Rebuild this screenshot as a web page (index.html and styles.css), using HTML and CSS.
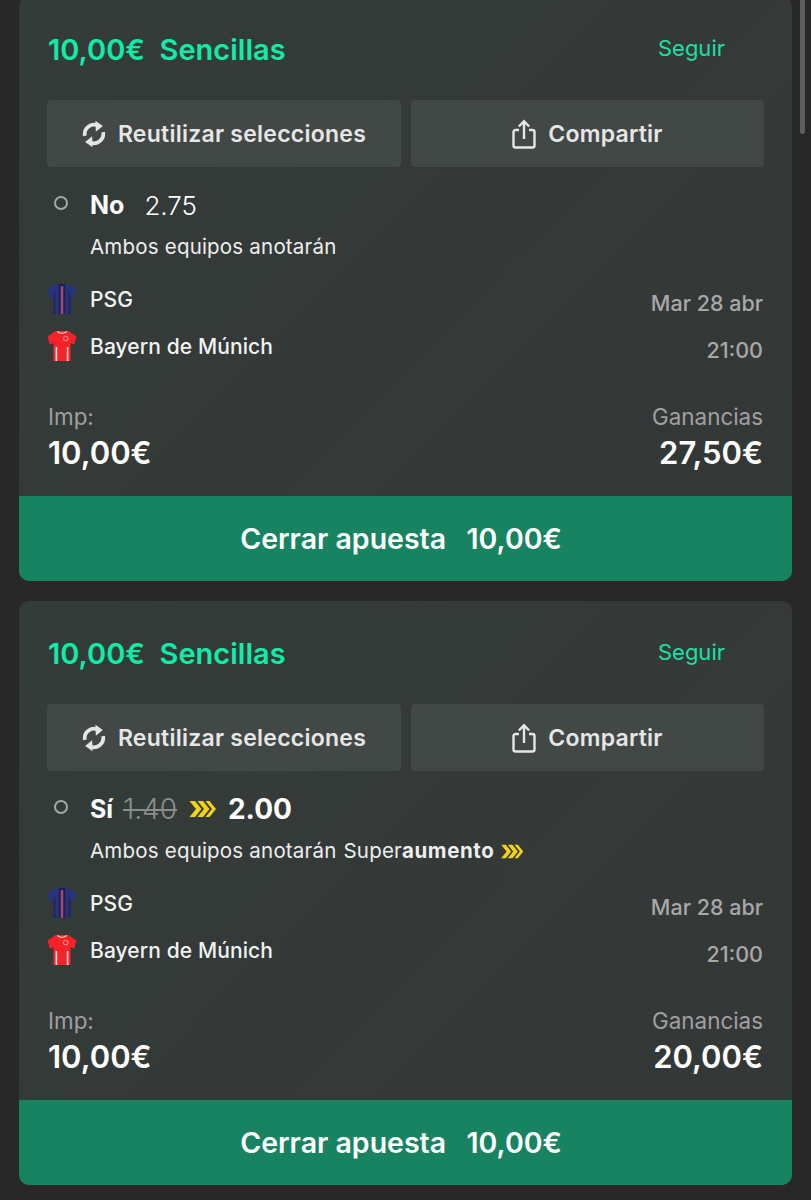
FILE: index.html
```html
<!DOCTYPE html>
<html lang="es">
<head>
  <meta charset="UTF-8" />
  <meta name="viewport" content="width=device-width, initial-scale=1" />
  <title>Mis apuestas</title>
  <link rel="stylesheet" href="styles.css">
</head>
<body>
  <svg class="icon-defs" width="0" height="0" aria-hidden="true">
    <symbol id="i-reuse" viewBox="2.500 0 19 24">
      <path d="M4.2 13.6A8 8 0 0 1 16 5.2" fill="none" stroke="currentColor" stroke-width="3.2"/>
      <path d="M13.2 0.6L19.6 5.2L13.6 10Z" fill="currentColor"/>
      <path d="M19.8 10.4A8 8 0 0 1 8 18.8" fill="none" stroke="currentColor" stroke-width="3.2"/>
      <path d="M10.8 23.4L4.4 18.8L10.4 14Z" fill="currentColor"/>
    </symbol>
    <symbol id="i-share" viewBox="0 0 24 30">
      <path d="M7 11H3.5A2 2 0 0 0 1.500 13V26.500A2 2 0 0 0 3.500 28.500H20.500A2 2 0 0 0 22.500 26.500V13A2 2 0 0 0 20.500 11H17" fill="none" stroke="currentColor" stroke-width="2.400"/>
      <path d="M12 20V2.500M6.800 7.500L12 2.300L17.200 7.500" fill="none" stroke="currentColor" stroke-width="2.400"/>
    </symbol>
    <symbol id="i-boost" viewBox="0 0 28 18">
      <path d="M1 1H6.500L13 9L6.500 17H1L7.500 9Z M9 1H14.500L21 9L14.500 17H9L15.500 9Z M17 1H21L27.500 9L21 17H17L23.500 9Z" fill="currentColor"/>
    </symbol>
    <symbol id="i-psg" viewBox="0 0 28 30">
      <path d="M8 1H20L27.500 6L25.500 13.500L22 12.500V29H6V12.500L2.500 13.500L0.500 6Z" fill="#27337c"/>
      <path d="M11 1H17V29H11Z" fill="#1c2050"/>
      <path d="M12.800 3H15.200V29H12.800Z" fill="#a5476a"/>
      <path d="M6 12.500V29H8V8ZM22 12.500V29H20V8Z" fill="#1f2860"/>
    </symbol>
    <symbol id="i-bayern" viewBox="0 0 28 30">
      <path d="M8 1H20L27.500 6L25.500 13.500L22 12.500V29H6V12.500L2.500 13.500L0.500 6Z" fill="#f5222a"/>
      <path d="M9.500 1.500Q14 5 18.500 1.500" fill="none" stroke="#f8c0b8" stroke-width="1.200"/>
      <circle cx="17.500" cy="8" r="2.200" fill="none" stroke="#f8a8a0" stroke-width="0.800"/>
      <path d="M8 16H9.500V29H8ZM18.500 16H20V29H18.500Z" fill="#fbe4e0"/>
    </symbol>
  </svg>

  <div class="scrollbar"></div>

  <main class="bet-list">
    <section class="bet-card">
      <div class="bet-body">
        <header class="bet-head">
          <h2>10,00€&nbsp; Sencillas</h2>
          <a class="follow">Seguir</a>
        </header>
        <div class="actions">
          <button class="action"><svg class="icon-reuse"><use href="#i-reuse"/></svg>Reutilizar selecciones</button>
          <button class="action"><svg class="icon-share"><use href="#i-share"/></svg>Compartir</button>
        </div>
        <div class="pick">
          <span class="dot"></span>
          <div class="pick-text">
            <div class="pick-line"><strong>No</strong><span class="odds">2.75</span></div>
            <div class="market">Ambos equipos anotarán</div>
          </div>
        </div>
        <div class="match">
          <div class="teams">
            <div class="team"><svg class="shirt"><use href="#i-psg"/></svg>PSG</div>
            <div class="team"><svg class="shirt"><use href="#i-bayern"/></svg>Bayern de Múnich</div>
          </div>
          <div class="kickoff">
            <span>Mar 28 abr</span>
            <span>21:00</span>
          </div>
        </div>
        <div class="totals">
          <div class="total"><span class="label">Imp:</span><span class="amount">10,00€</span></div>
          <div class="total total-right"><span class="label">Ganancias</span><span class="amount">27,50€</span></div>
        </div>
      </div>
      <button class="cashout">Cerrar apuesta&nbsp; <span class="cashout-value">10,00€</span></button>
    </section>

    <section class="bet-card">
      <div class="bet-body">
        <header class="bet-head">
          <h2>10,00€&nbsp; Sencillas</h2>
          <a class="follow">Seguir</a>
        </header>
        <div class="actions">
          <button class="action"><svg class="icon-reuse"><use href="#i-reuse"/></svg>Reutilizar selecciones</button>
          <button class="action"><svg class="icon-share"><use href="#i-share"/></svg>Compartir</button>
        </div>
        <div class="pick">
          <span class="dot"></span>
          <div class="pick-text">
            <div class="pick-line">
              <strong>Sí</strong><s class="old-odds">1.40</s>
              <svg class="boost"><use href="#i-boost"/></svg>
              <strong class="new-odds">2.00</strong>
            </div>
            <div class="market">Ambos equipos anotarán <span class="super">Super<b>aumento</b></span><svg class="boost-small"><use href="#i-boost"/></svg></div>
          </div>
        </div>
        <div class="match">
          <div class="teams">
            <div class="team"><svg class="shirt"><use href="#i-psg"/></svg>PSG</div>
            <div class="team"><svg class="shirt"><use href="#i-bayern"/></svg>Bayern de Múnich</div>
          </div>
          <div class="kickoff">
            <span>Mar 28 abr</span>
            <span>21:00</span>
          </div>
        </div>
        <div class="totals">
          <div class="total"><span class="label">Imp:</span><span class="amount">10,00€</span></div>
          <div class="total total-right"><span class="label">Ganancias</span><span class="amount">20,00€</span></div>
        </div>
      </div>
      <button class="cashout">Cerrar apuesta&nbsp; <span class="cashout-value">10,00€</span></button>
    </section>
  </main>
</body>
</html>
```

FILE: styles.css
```css
* {
  box-sizing: border-box;
  font-family: 'Inter', 'Liberation Sans', sans-serif;
}

html, body {
  height: 1200px;
  overflow: hidden;
}

body {
  background-color: #282828;
  margin: 0;
  position: relative;
}

.icon-defs {
  position: absolute;
}

.scrollbar {
  position: absolute;
  top: 0;
  right: 6px;
  width: 5px;
  height: 134px;
  background-color: #5e5e5e;
  border-radius: 0 0 3px 3px;
}

.bet-list {
  display: flex;
  flex-direction: column;
  gap: 20px;
  margin-top: -3px;
  padding: 0 19px;
}

.bet-card {
  height: 584px;
  background: linear-gradient(135deg, #323c39 0%, #353938 60%, #323737 100%);
  border-radius: 10px;
  overflow: hidden;
  display: flex;
  flex-direction: column;
}

.bet-body {
  flex: 1;
  padding: 0 29px;
}

.bet-head {
  height: 103px;
  display: flex;
  justify-content: space-between;
  align-items: flex-start;
  padding-top: 36px;
}

.bet-head h2 {
  margin: 0;
  font-size: 29px;
  line-height: 34px;
  font-weight: 600;
  color: #10eca8;
  letter-spacing: 0;
}

.follow {
  font-size: 22px;
  line-height: 30px;
  color: #18e0a4;
  margin-right: 38px;
}

.actions {
  display: grid;
  grid-template-columns: 354px 353px;
  gap: 10px;
  margin: 0 -1px;
}

.action {
  height: 67px;
  display: flex;
  align-items: center;
  justify-content: center;
  gap: 12px;
  background-color: #424846;
  border: none;
  border-radius: 4px;
  color: #e6e6e6;
  font-size: 23px;
  letter-spacing: 0.25px;
  font-weight: 600;
}

.icon-reuse {
  width: 24px;
  height: 28px;
}

.icon-share {
  width: 24px;
  height: 30px;
}

.pick {
  display: flex;
  padding-top: 19px;
  height: 116px;
}

.dot {
  width: 14px;
  height: 14px;
  margin: 10px 0 0 6px;
  border: 2px solid #a3a8a6;
  border-radius: 50%;
}

.pick-text {
  margin-left: 21px;
}

.pick-line {
  display: flex;
  align-items: center;
  height: 38px;
  margin-left: 1px;
  color: #fff;
  font-size: 25px;
}

.pick-line strong {
  font-weight: 700;
}

.odds {
  margin-left: 20px;
  font-size: 26px;
  font-weight: 300;
}

.old-odds {
  margin-left: 10px;
  color: #8a8f8d;
  font-size: 28px;
  font-weight: 300;
}

.boost {
  width: 29px;
  height: 18px;
  margin-left: 11px;
  color: #f5d312;
}

.new-odds {
  margin-left: 11px;
  font-size: 28px;
}

.market {
  display: flex;
  align-items: center;
  margin-top: 9px;
  margin-left: 1px;
  color: #eee;
  font-size: 20.5px;
  letter-spacing: 0.2px;
  line-height: 28px;
  white-space: pre;
}

.super {
  margin-left: 1px;
}

.super b {
  font-weight: 700;
  letter-spacing: 0.6px;
}

.boost-small {
  width: 24px;
  height: 15px;
  margin-left: 6px;
  color: #f5d312;
}

.match {
  display: flex;
  justify-content: space-between;
  height: 119px;
}

.teams {
  display: flex;
  flex-direction: column;
  gap: 15px;
}

.team {
  display: flex;
  align-items: center;
  height: 32px;
  color: #f2f2f2;
  font-size: 21px;
  letter-spacing: 0.1px;
  font-weight: 500;
}

.shirt {
  width: 30px;
  height: 32px;
  margin: 0 13px 0 -1px;
}

.kickoff {
  display: flex;
  flex-direction: column;
  align-items: flex-end;
  gap: 19px;
  padding-top: 6px;
  color: #a8a8a8;
  font-size: 21.5px;
  font-weight: 500;
}

.kickoff span {
  line-height: 28px;
}

.totals {
  display: flex;
  justify-content: space-between;
}

.total {
  display: flex;
  flex-direction: column;
}

.total-right {
  align-items: flex-end;
}

.label {
  color: #a0a0a0;
  font-size: 22.4px;
  line-height: 29px;
}

.amount {
  color: #fff;
  font-size: 31px;
  line-height: 44px;
  font-weight: 600;
}

.cashout {
  height: 85px;
  width: 100%;
  flex-shrink: 0;
  padding: 0 9px 0 0;
  background-color: #178360;
  border: none;
  color: #fff;
  font-size: 28.5px;
  font-weight: 600;
}

.cashout-value {
  margin-left: 6px;
}
```
